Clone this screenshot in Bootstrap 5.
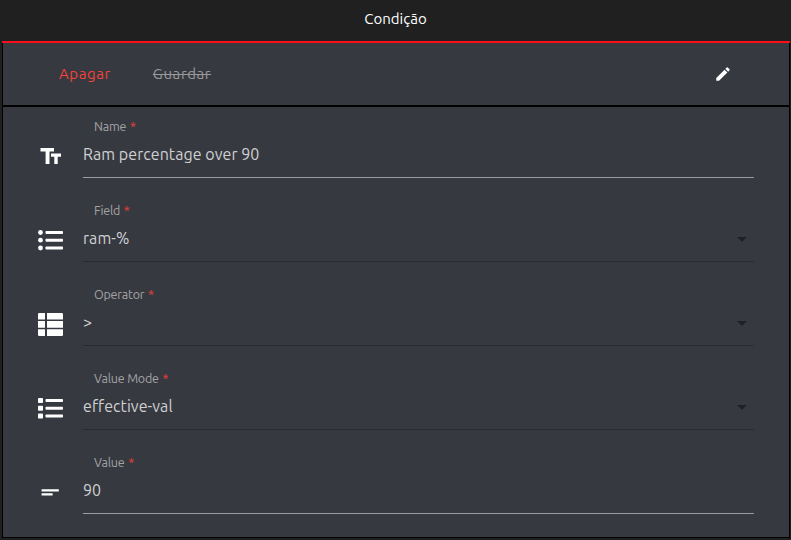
<!DOCTYPE html>
<html lang="pt">
<head>
<meta charset="utf-8">
<meta name="viewport" content="width=device-width, initial-scale=1">
<title>Condição</title>
<link href="https://cdn.jsdelivr.net/npm/bootstrap@5.3.0/dist/css/bootstrap.min.css" rel="stylesheet">
<style>
body { background: #202020; font-family: Ubuntu, "Noto Sans", sans-serif; height: 540px; overflow: hidden; }
.title-bar { height: 41px; padding-bottom: 3px; color: #fff; font-size: 15px; }
.panel { height: 497px; margin: 0 1px 0 2px; border-top: 2px solid #fc0d1b; }
.panel-inner { height: 495px; background: #373940; border: solid #000; border-width: 0 1px 1px; }
.tools { height: 64px; border-bottom: 2px solid #000; padding: 0 57px 0 56px; }
.tools button { font-size: 15px; line-height: 20px; letter-spacing: .6px; }
.delete-btn { color: #f44336; margin-right: 42px; }
.save-btn { color: #98999b; text-decoration: line-through; }
.fields { gap: 13px; padding: 0 35px 0 29px; }
.entry { height: 71px; }
.entry-icon { width: 36px; margin-right: 15px; padding-top: 28px; }
.entry-label { font-size: 12.5px; line-height: 16px; padding: 11px 0 0 11px; color: #a2a3a5; letter-spacing: -.2px; }
.entry-label span { color: #f04038; margin-left: 1px; }
.entry-value { height: 43px; padding-bottom: 4px; font-size: 16px; line-height: 20px; letter-spacing: .06px; color: #cfd0d2; }
.line-solid { height: 1px; background: #9b9c9f; }
.line-dots { height: 1px; background: repeating-linear-gradient(90deg, #202124 0 1px, #34363c 1px 2px); }
.arrow { width: 0; height: 0; border: 5px solid transparent; border-top-color: #202124; border-bottom: 0; margin: 3px 7px 0 0; }
svg { display: block; fill: #fff; }
</style>
</head>
<body>
<header class="title-bar d-flex align-items-center justify-content-center">Condição</header>
<main class="panel">
<div class="panel-inner">
  <div class="tools d-flex align-items-center">
    <button class="delete-btn btn p-0 border-0">Apagar</button>
    <button class="save-btn btn p-0 border-0">Guardar</button>
    <svg class="ms-auto" width="18" height="18" viewBox="0 0 24 24"><path d="M3 17.25V21h3.75L17.81 9.94l-3.75-3.75L3 17.25zM20.71 7.04a1 1 0 0 0 0-1.41l-2.34-2.34a1 1 0 0 0-1.41 0l-1.83 1.83 3.75 3.75 1.83-1.83z"/></svg>
  </div>
  <div class="fields d-flex flex-column">
    <div class="entry d-flex">
      <div class="entry-icon d-flex align-items-center justify-content-center"><svg width="25" height="25" viewBox="0 0 25 25"><path d="M2.5 4H16v3.5h-4.5V20H7.6V7.5H2.5zM13 9.5h10v3.2h-3.3V20h-3.4v-7.3H13z"/></svg></div>
      <div class="flex-grow-1"><div class="entry-label">Name <span>*</span></div><div class="entry-value d-flex align-items-center">Ram percentage over 90</div><div class="line-solid"></div></div>
    </div>
    <div class="entry d-flex">
      <div class="entry-icon d-flex align-items-center justify-content-center"><svg width="25" height="23" viewBox="0 0 25 23"><circle cx="2.5" cy="3.5" r="2.4"/><circle cx="2.5" cy="11.2" r="2.4"/><circle cx="2.5" cy="19" r="2.4"/><rect x="7.5" y="2" width="17.5" height="3" rx=".7"/><rect x="7.5" y="9.7" width="17.5" height="3" rx=".7"/><rect x="7.5" y="17.5" width="17.5" height="3" rx=".7"/></svg></div>
      <div class="flex-grow-1"><div class="entry-label">Field <span>*</span></div><div class="entry-value d-flex align-items-center justify-content-between">ram-%<i class="arrow"></i></div><div class="line-dots"></div></div>
    </div>
    <div class="entry d-flex">
      <div class="entry-icon d-flex align-items-center justify-content-center"><svg width="25" height="23" viewBox="0 0 25 23"><path d="M1.2 0H7v6.6H0V1.2Q0 0 1.2 0zM9 0h14.8Q25 0 25 1.2v5.4H9zM0 8.1h7v6.7H0zM9 8.1h16v6.7H9zM0 16.3h7V23H1.2Q0 23 0 21.8zM9 16.3h16v5.5q0 1.2-1.2 1.2H9z"/></svg></div>
      <div class="flex-grow-1"><div class="entry-label">Operator <span>*</span></div><div class="entry-value d-flex align-items-center justify-content-between">&gt;<i class="arrow"></i></div><div class="line-dots"></div></div>
    </div>
    <div class="entry d-flex">
      <div class="entry-icon d-flex align-items-center justify-content-center"><svg width="25" height="23" viewBox="0 0 25 23"><rect y="1" width="5" height="5" rx=".8"/><rect y="8.8" width="5" height="5" rx=".8"/><rect y="16.6" width="5" height="5" rx=".8"/><rect x="7.5" y="2" width="17.5" height="3" rx=".7"/><rect x="7.5" y="9.7" width="17.5" height="3" rx=".7"/><rect x="7.5" y="17.5" width="17.5" height="3" rx=".7"/></svg></div>
      <div class="flex-grow-1"><div class="entry-label">Value Mode <span>*</span></div><div class="entry-value d-flex align-items-center justify-content-between">effective-val<i class="arrow"></i></div><div class="line-dots"></div></div>
    </div>
    <div class="entry d-flex">
      <div class="entry-icon d-flex align-items-center justify-content-center"><svg width="25" height="25" viewBox="0 0 25 25"><path d="M3.6 9.2h17.2v2.3H3.6zM3.6 13.2h11v2.3h-11z"/></svg></div>
      <div class="flex-grow-1"><div class="entry-label">Value <span>*</span></div><div class="entry-value d-flex align-items-center">90</div><div class="line-solid"></div></div>
    </div>
  </div>
</div>
</main>
<script src="https://cdn.jsdelivr.net/npm/bootstrap@5.3.0/dist/js/bootstrap.bundle.min.js"></script>
</body>
</html>
